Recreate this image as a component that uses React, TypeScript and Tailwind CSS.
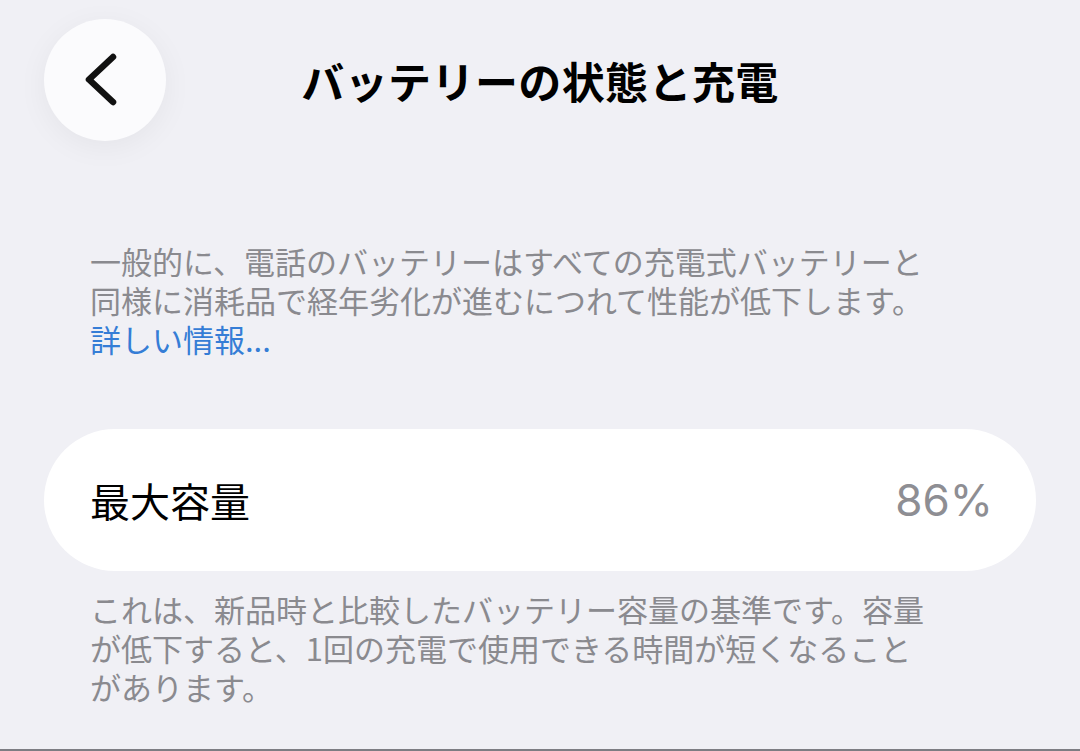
import React from "react";

const jp = { fontFamily: '"Noto Sans CJK JP", "Noto Sans", sans-serif' };

// Back button chevron
const Chevron = () => (
  <svg width="122" height="122" viewBox="0 0 122 122" fill="none">
    <path d="M69 38 L45 60.5 L69 83" stroke="#111" strokeWidth="6.5" strokeLinecap="round" strokeLinejoin="round" />
  </svg>
);

export default function App() {
  return (
    <div className="w-[1080px] h-[751px] bg-[#f0f0f5] flex flex-col overflow-hidden" style={jp}>
      {/* Header */}
      <header className="pt-[19px] px-[44px] grid grid-cols-[1fr_auto_1fr] items-center">
        <button className="w-[122px] h-[122px] rounded-full bg-[#fbfbfd] shadow-[0_6px_30px_rgba(0,0,0,0.05)] flex items-center justify-center">
          <Chevron />
        </button>
        <h1 className="text-[43px] font-bold text-black leading-none tracking-[0.4px]">バッテリーの状態と充電</h1>
        <div />
      </header>

      <div className="px-[44px] flex flex-col">
        {/* Description */}
        <p className="mt-[100px] px-[46px] text-[31px] leading-[39px] text-[#8a8a8f]">
          一般的に、電話のバッテリーはすべての充電式バッテリーと
          <br />
          同様に消耗品で経年劣化が進むにつれて性能が低下します。
          <br />
          <span className="text-[#357dd6]">詳しい情報...</span>
        </p>

        {/* Maximum capacity card */}
        <div className="mt-[71px] h-[142px] rounded-full bg-white flex items-center justify-between pl-[46px] pr-[43px]">
          <span className="text-[40px] text-black leading-none">最大容量</span>
          <span className="text-[44px] text-[#8e8e93] leading-none" style={{ fontFamily: 'Inter, "Liberation Sans", sans-serif' }}>
            86%
          </span>
        </div>

        <p className="mt-[18px] px-[46px] text-[31px] leading-[39px] text-[#8a8a8f]">
          これは、新品時と比較したバッテリー容量の基準です。容量
          <br />
          が低下すると、1回の充電で使用できる時間が短くなること
          <br />
          があります。
        </p>
      </div>

      <div className="mt-auto h-[2px] bg-[#7d7d83]" />
    </div>
  );
}
